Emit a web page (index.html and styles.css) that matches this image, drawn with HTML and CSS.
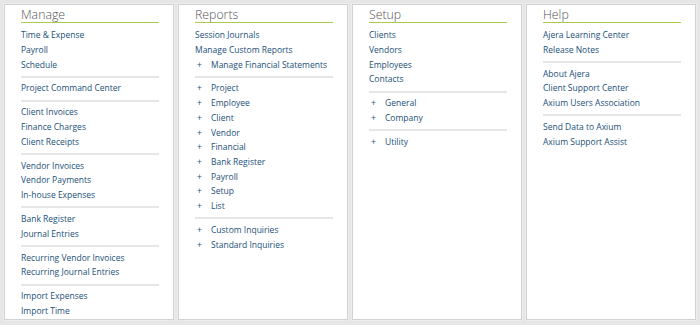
FILE: index.html
```html
<!DOCTYPE html>
<html>
<head>
<meta charset="utf-8">
<link rel="stylesheet" href="styles.css">
</head>
<body>
<div class="board">
  <section class="panel">
    <h2 class="title">Manage</h2>
    <ul class="group">
      <li><a class="link">Time &amp; Expense</a></li>
      <li><a class="link">Payroll</a></li>
      <li><a class="link">Schedule</a></li>
    </ul>
    <ul class="group">
      <li><a class="link">Project Command Center</a></li>
    </ul>
    <ul class="group">
      <li><a class="link">Client Invoices</a></li>
      <li><a class="link">Finance Charges</a></li>
      <li><a class="link">Client Receipts</a></li>
    </ul>
    <ul class="group">
      <li><a class="link">Vendor Invoices</a></li>
      <li><a class="link">Vendor Payments</a></li>
      <li><a class="link">In-house Expenses</a></li>
    </ul>
    <ul class="group">
      <li><a class="link">Bank Register</a></li>
      <li><a class="link">Journal Entries</a></li>
    </ul>
    <ul class="group">
      <li><a class="link">Recurring Vendor Invoices</a></li>
      <li><a class="link">Recurring Journal Entries</a></li>
    </ul>
    <ul class="group">
      <li><a class="link">Import Expenses</a></li>
      <li><a class="link">Import Time</a></li>
    </ul>
  </section>

  <section class="panel">
    <h2 class="title">Reports</h2>
    <ul class="group">
      <li><a class="link">Session Journals</a></li>
      <li><a class="link">Manage Custom Reports</a></li>
      <li class="exp"><span class="plus">+</span><a class="link">Manage Financial Statements</a></li>
    </ul>
    <ul class="group">
      <li class="exp"><span class="plus">+</span><a class="link">Project</a></li>
      <li class="exp"><span class="plus">+</span><a class="link">Employee</a></li>
      <li class="exp"><span class="plus">+</span><a class="link">Client</a></li>
      <li class="exp"><span class="plus">+</span><a class="link">Vendor</a></li>
      <li class="exp"><span class="plus">+</span><a class="link">Financial</a></li>
      <li class="exp"><span class="plus">+</span><a class="link">Bank Register</a></li>
      <li class="exp"><span class="plus">+</span><a class="link">Payroll</a></li>
      <li class="exp"><span class="plus">+</span><a class="link">Setup</a></li>
      <li class="exp"><span class="plus">+</span><a class="link">List</a></li>
    </ul>
    <ul class="group">
      <li class="exp"><span class="plus">+</span><a class="link">Custom Inquiries</a></li>
      <li class="exp"><span class="plus">+</span><a class="link">Standard Inquiries</a></li>
    </ul>
  </section>

  <section class="panel">
    <h2 class="title">Setup</h2>
    <ul class="group">
      <li><a class="link">Clients</a></li>
      <li><a class="link">Vendors</a></li>
      <li><a class="link">Employees</a></li>
      <li><a class="link">Contacts</a></li>
    </ul>
    <ul class="group">
      <li class="exp"><span class="plus">+</span><a class="link">General</a></li>
      <li class="exp"><span class="plus">+</span><a class="link">Company</a></li>
    </ul>
    <ul class="group">
      <li class="exp"><span class="plus">+</span><a class="link">Utility</a></li>
    </ul>
  </section>

  <section class="panel">
    <h2 class="title">Help</h2>
    <ul class="group">
      <li><a class="link">Ajera Learning Center</a></li>
      <li><a class="link">Release Notes</a></li>
    </ul>
    <ul class="group">
      <li><a class="link">About Ajera</a></li>
      <li><a class="link">Client Support Center</a></li>
      <li><a class="link">Axium Users Association</a></li>
    </ul>
    <ul class="group">
      <li><a class="link">Send Data to Axium</a></li>
      <li><a class="link">Axium Support Assist</a></li>
    </ul>
  </section>
</div>
</body>
</html>
```

FILE: styles.css
```css
* { box-sizing: border-box; }

html, body {
  margin: 0;
  padding: 0;
  background: #e6e6e6;
}

body {
  font-family: "Open Sans", "DejaVu Sans", sans-serif;
  width: 700px;
  height: 325px;
  overflow: hidden;
}

.board {
  display: grid;
  grid-template-columns: repeat(4, 1fr);
  gap: 4px;
  padding: 4px 4px 0 4px;
  height: 320px;
}

.panel {
  background: #fff;
  border: 1px solid #d2d2d2;
  box-shadow: 0 0 0 1px #ededed;
  padding: 1.5px 14px 0 16px;
  height: 316px;
}

.title {
  margin: 0;
  font-size: 12.3px;
  line-height: 15px;
  font-weight: 300;
  color: #555;
  border-bottom: 1px solid #a9c94f;
}

.group {
  list-style: none;
  margin: 0;
  padding: 0;
}

.title + .group {
  margin-top: 5.7px;
}

.group + .group {
  border-top: 2px solid #e6e6e6;
  margin-top: 3.6px;
  padding-top: 3.6px;
}

.group li {
  display: flex;
  font-size: 8.5px;
  line-height: 14.7px;
  white-space: nowrap;
}

.link {
  color: #215078;
  text-decoration: none;
}

.plus {
  width: 16px;
  padding-left: 2px;
  color: #215078;
}
```
